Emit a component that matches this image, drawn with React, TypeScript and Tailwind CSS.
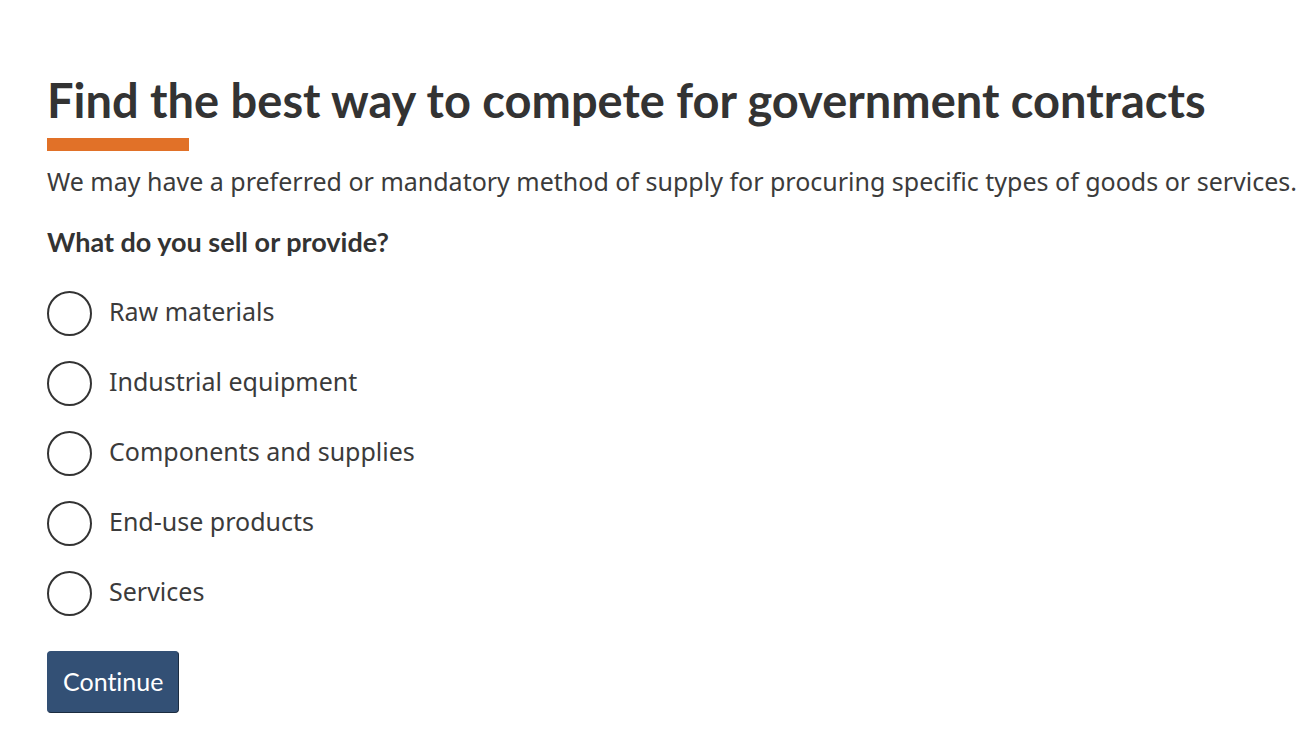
import { useState } from "react";

const options = [
  { value: "raw", label: "Raw materials" },
  { value: "equipment", label: "Industrial equipment" },
  { value: "components", label: "Components and supplies" },
  { value: "products", label: "End-use products" },
  { value: "services", label: "Services" },
];

export default function App() {
  const [selected, setSelected] = useState("");

  return (
    <main className="min-h-screen bg-white pt-[71px] pb-6 pl-[47px] font-['Noto_Sans',sans-serif] text-[25px] text-[#3b3b3b]">
      <h1 className="font-['Lato',sans-serif] text-[47px] leading-[58px] font-bold text-[#333]">
        Find the best way to compete for government contracts
      </h1>
      <div className="mt-[9px] h-[13px] w-[142px] bg-[#e17128]" />
      <p className="mt-3 leading-[36px]">
        We may have a preferred or mandatory method of supply for procuring specific types of goods or services.
      </p>
      <form onSubmit={(e) => e.preventDefault()}>
        <fieldset>
          <legend className="pt-[25px] font-['Lato',sans-serif] text-[27px] leading-[36px] font-bold text-[#333]">
            What do you sell or provide?
          </legend>
          <div className="mt-[31px] flex flex-col gap-[25px]">
            {options.map(({ value, label }) => (
              <div key={value} className="flex items-start gap-[17px]">
                <input
                  type="radio"
                  id={value}
                  name="offering"
                  value={value}
                  checked={selected === value}
                  onChange={() => setSelected(value)}
                  className="size-[45px] shrink-0 appearance-none rounded-full border-2 border-[#333] bg-white checked:border-[14px]"
                />
                <label htmlFor={value} className="leading-[40px]">
                  {label}
                </label>
              </div>
            ))}
          </div>
        </fieldset>
        <button
          type="submit"
          className="mt-[35px] h-[62px] rounded-[4px] border border-[#335075] border-r-[#1c2c40] border-b-[#1c2c40] bg-[#335075] px-[15px] font-['Lato',sans-serif] text-[25px] text-white [font-variant-ligatures:none]"
        >
          Continue
        </button>
      </form>
    </main>
  );
}
